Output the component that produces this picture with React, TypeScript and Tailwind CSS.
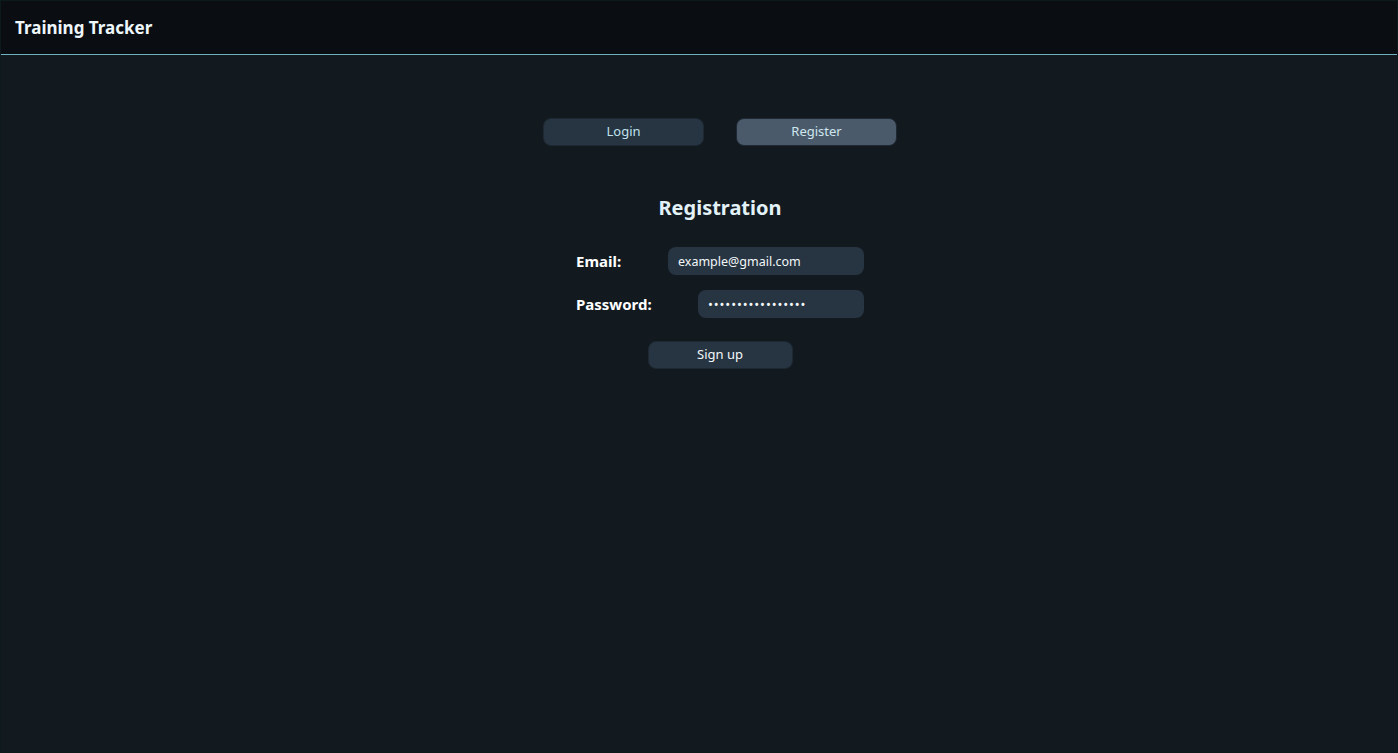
export default function App() {
  return (
    <div
      className="flex min-h-[753px] flex-col border border-[#0c1a1d] bg-[#121a20] text-[#e6f3f8]"
      style={{ fontFamily: '"Noto Sans", "Open Sans", sans-serif' }}
    >
      {/* Top bar */}
      <header className="flex h-[54px] items-center border-b border-[#6fb2be] bg-[#0a0e12] px-[14px]">
        <h1 className="text-[17px] font-bold text-[#eef7fa]">Training Tracker</h1>
      </header>

      <main className="flex flex-col items-center pl-[42px] pt-[63px]">
        {/* Tabs */}
        <div className="flex gap-[32px]">
          <button className="h-[28px] w-[161px] rounded-[8px] border border-[#1d2833] bg-[#273441] text-[13px] text-[#bfe2ee]">
            Login
          </button>
          <button className="h-[28px] w-[161px] rounded-[8px] border border-[#1d2833] bg-[#4a5a6b] text-[13px] text-[#cfe6ee]">
            Register
          </button>
        </div>

        <h2 className="mt-[47px] text-[20px] font-bold text-[#e3f2f7]">Registration</h2>

        {/* Form */}
        <form className="mt-[24px] flex w-[288px] flex-col gap-[15px]">
          <div className="flex items-center justify-between">
            <label className="text-[15px] font-bold text-white">Email:</label>
            <input
              type="text"
              defaultValue="example@gmail.com"
              className="h-[28px] w-[196px] rounded-[8px] bg-[#273441] px-[10px] text-[12.5px] text-[#f2f8fa] outline-none"
            />
          </div>
          <div className="flex items-center justify-between">
            <label className="text-[15px] font-bold text-white">Password:</label>
            <input
              type="password"
              defaultValue="examplepassword12"
              className="h-[28px] w-[166px] rounded-[8px] bg-[#273441] px-[10px] text-[13px] tracking-[0.9px] text-[#f2f8fa] outline-none"
            />
          </div>
          <div className="mt-[8px] flex justify-center">
            <button
              type="button"
              className="h-[28px] w-[145px] rounded-[8px] border border-[#1d2833] bg-[#273441] text-[13px] text-[#f2f8fa]"
            >
              Sign up
            </button>
          </div>
        </form>
      </main>
    </div>
  )
}
